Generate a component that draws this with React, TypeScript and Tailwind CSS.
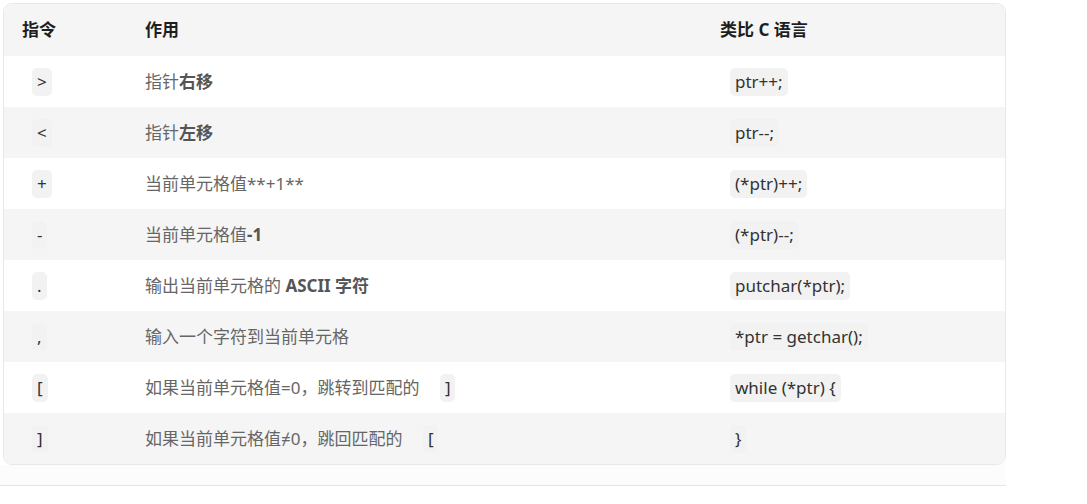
import React from "react";

const font = { fontFamily: '"Noto Sans", "Noto Sans CJK SC", sans-serif' };

function Chip({ children, className = "" }: { children: React.ReactNode; className?: string }) {
  return (
    <span className={"inline-block rounded-[5px] bg-[#f2f2f2] px-[5px] py-[4px] leading-[20px] text-[#333] " + className}>
      {children}
    </span>
  );
}

type Row = { op: string; desc: React.ReactNode; code: string };

const B = ({ children }: { children: React.ReactNode }) => (
  <b className="font-bold text-[#555]">{children}</b>
);

const rows: Row[] = [
  { op: ">", desc: <>指针<B>右移</B></>, code: "ptr++;" },
  { op: "<", desc: <>指针<B>左移</B></>, code: "ptr--;" },
  { op: "+", desc: <>当前单元格值**+1**</>, code: "(*ptr)++;" },
  { op: "-", desc: <>当前单元格值<B>-1</B></>, code: "(*ptr)--;" },
  { op: ".", desc: <>输出当前单元格的 <B>ASCII 字符</B></>, code: "putchar(*ptr);" },
  { op: ",", desc: <>输入一个字符到当前单元格</>, code: "*ptr = getchar();" },
  { op: "[", desc: <>如果当前单元格值=0，跳转到匹配的 <Chip className="ml-[16px]">]</Chip></>, code: "while (*ptr) {" },
  { op: "]", desc: <>如果当前单元格值≠0，跳回匹配的 <Chip className="ml-[16px]">[</Chip></>, code: "}" },
];

export default function App() {
  return (
    <div className="min-h-[504px] w-full bg-white pt-[3px]" style={font}>
      <div className="ml-[3px] w-[1003px] overflow-hidden rounded-[9px] border border-[#e8e8e8] text-[17px]">
        <div className="grid h-[52px] grid-cols-[141px_575px_1fr] items-center bg-[#f5f5f5] font-bold text-[#1e1e1e]">
          <div className="pl-[18px]">指令</div>
          <div>作用</div>
          <div>类比 C 语言</div>
        </div>
        {rows.map((r, i) => (
          <div
            key={i}
            className={
              "grid h-[51px] grid-cols-[141px_575px_1fr] items-center " +
              (i % 2 === 0 ? "bg-white" : "bg-[#f5f5f5]")
            }
          >
            <div className="pl-[28px]">
              <Chip>{r.op}</Chip>
            </div>
            <div className="text-[#666]">{r.desc}</div>
            <div className="pl-[10px]">
              <Chip>{r.code}</Chip>
            </div>
          </div>
        ))}
      </div>
      <div className="h-[21px] w-[1006px] border-b border-[#e6e6e6] bg-[#fcfcfc]" />
    </div>
  );
}
